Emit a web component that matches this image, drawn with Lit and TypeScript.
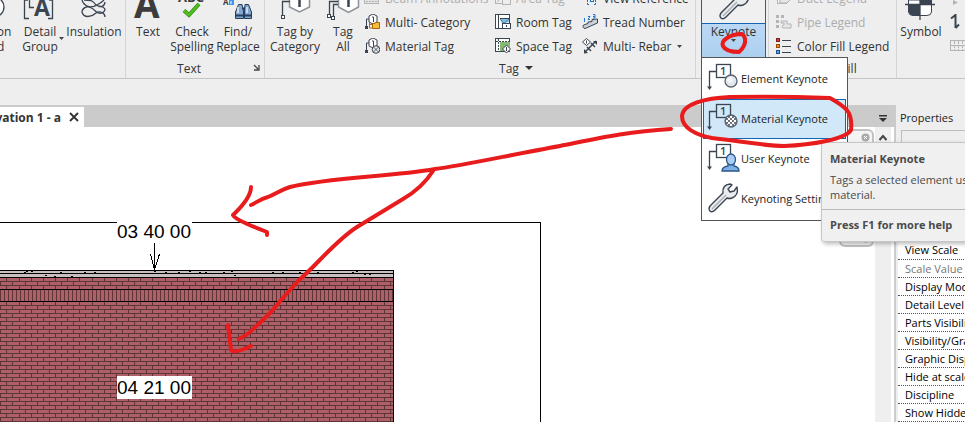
import { LitElement, html, svg, css, TemplateResult } from "lit";
import { customElement } from "lit/decorators.js";

const DARK = "#3b4552";
const GREY = "#b4b4b4";

const wrench = svg`
  <path d="M4 29 Q2 27 4 24 L17 11 Q16 3 24 2 L26 3 L22 7 L24 10 L28 9 L31 5 Q33 13 26 16 Q23 17 21 16 L9 28 Q6 31 4 29 Z"
    fill="#e9ebee" stroke="${DARK}" stroke-width="1.4" stroke-linejoin="round"/>
  <path d="M6 27 L20 13" stroke="#a9adb5" stroke-width="1.5"/>`;

const noteBase = svg`
  <rect x="10.5" y="2.5" width="14" height="13" fill="none" stroke="${DARK}" stroke-width="1.3"/>
  <path d="M10 9.500 H3.500 V25" fill="none" stroke="${DARK}" stroke-width="1.3"/>
  <path d="M1 24.500 H6 L3.500 28 Z" fill="${DARK}"/>
  <text x="14" y="13" font-size="11" font-family="Open Sans, sans-serif" font-weight="600" fill="${DARK}">1</text>`;

const menuIcons: Record<string, TemplateResult> = {
  element: svg`${noteBase}<circle cx="25" cy="19" r="6" fill="#dfe6ec" stroke="#59636e" stroke-width="1.3"/>
    <circle cx="24" cy="18" r="3" fill="#f3f6f8"/>`,
  material: svg`
    <defs><pattern id="chk" width="4" height="4" patternUnits="userSpaceOnUse">
      <rect width="4" height="4" fill="#fff"/><rect width="2" height="2" fill="#6d747d"/><rect x="2" y="2" width="2" height="2" fill="#6d747d"/>
    </pattern></defs>
    ${noteBase}<circle cx="25" cy="19" r="6" fill="url(#chk)" stroke="#59636e" stroke-width="1.3"/>`,
  user: svg`${noteBase}
    <path d="M16 29 Q16 25 22 24 V21 H28 V24 Q33 25 33 29 Z" fill="#7fb0e6" stroke="#2d5688" stroke-width="1.3"/>
    <ellipse cx="25" cy="17.500" rx="4.500" ry="5.500" fill="#a9cdf3" stroke="#2d5688" stroke-width="1.3"/>`,
  settings: wrench,
};

const hexTag = (x: number, y: number) => svg`
  <path d="M${x} ${y - 6} L${x + 4} ${y - 4} V${y + 2} L${x} ${y + 4} L${x - 4} ${y + 2} V${y - 4} Z" fill="#fff" stroke="${DARK}" stroke-width="1"/>
  <path d="M${x - 1} ${y - 3} H${x + 0.5} V${y + 2}" fill="none" stroke="${DARK}" stroke-width="1"/>
  <path d="M${x - 4} ${y - 1} H2.500 V12" fill="none" stroke="${DARK}" stroke-width="1"/>
  <rect x="1" y="12" width="3" height="3" fill="${DARK}"/>`;

/* 16 x 16 list icons */
const smallIcons: Record<string, TemplateResult> = {
  beam: svg`<rect x="0.5" y="9.5" width="14" height="4" fill="#e2e2e2" stroke="${GREY}"/><path d="M2 11.500 H13" stroke="${GREY}" stroke-dasharray="2 1"/>`,
  multi: svg`${hexTag(9, 6)}
    <path d="M5.500 7 V14 H8 M5.500 10.500 H8" fill="none" stroke="#b06a10"/>
    <path d="M8.500 9.500 H11 L12 8.500 H15.500 V14.500 H8.500 Z" fill="#f5bd3a" stroke="#a8650c"/>`,
  material: svg`${hexTag(9, 6)}
    <circle cx="12" cy="11.500" r="3.800" fill="#e4e6e8" stroke="${DARK}"/><path d="M9.500 9 L14.500 14 M14.500 9 L9.500 14" stroke="${DARK}" stroke-width="0.8"/>`,
  area: svg`<rect x="0.500" y="1.500" width="13" height="12" fill="none" stroke="${GREY}"/><path d="M2 12 L12 3" stroke="${GREY}"/><rect x="7.500" y="9.500" width="8" height="5" fill="#eee" stroke="${GREY}"/>`,
  room: svg`<rect x="0.500" y="0.500" width="14" height="14" fill="#fff" stroke="${DARK}"/>
    <path d="M3.500 0 V15 M5 4.500 H14" stroke="${DARK}"/><path d="M5 5 H14 V8 L7 10 Z" fill="#84bfe0"/><path d="M5 5 L9 9 L14 5" fill="none" stroke="#4686ad"/>
    <rect x="7.500" y="9.500" width="8" height="5" fill="#fff" stroke="${DARK}"/><path d="M11.500 11 V13" stroke="${DARK}"/>`,
  space: svg`<rect x="0.500" y="0.500" width="14" height="13" fill="#fff" stroke="${DARK}"/>
    <rect x="5" y="4" width="10" height="9" fill="#86ba72"/><path d="M3.500 1 V14 M1 3.500 H14" stroke="${DARK}" stroke-dasharray="2 1"/>
    <path d="M11.500 7 L15.500 11 L11.500 15 L7.500 11 Z" fill="#fff" stroke="${DARK}"/><path d="M11.500 9 V13" stroke="${DARK}"/>`,
  viewref: svg`<path d="M7 6.500 H5.500 V14.500 H8 M12 6.500 H13.500 V14.500 H11" fill="none" stroke="#1f6fc4" stroke-dasharray="3 1"/><rect x="8.500" y="8.500" width="3" height="3" fill="none" stroke="#1f6fc4"/>`,
  tread: svg`<path d="M1.500 11 L6 9.500 V8 L10 7.500 V5.500 L15.500 5 V9 L3 14.500 Q0 14 1.500 11 Z" fill="#c9d0d8" stroke="${DARK}"/>
    <path d="M2.500 4 V8 M6 2.500 H8 L6 5.500 H8 M11 0.500 H13 V4 H11 M11 2.500 H13" fill="none" stroke="#1f78d6"/>`,
  rebar: svg`<path d="M4.500 0.500 L8.500 4 L4.500 7.500 L0.500 4 Z" fill="#fff" stroke="${DARK}"/><path d="M4.500 2.500 V5.500" stroke="${DARK}"/>
    <path d="M3 14 L14 3 M5 9 L9 13 M9 5 L13 9" stroke="${DARK}" stroke-width="1.500"/><path d="M11 3 H15 V7 Z M2 15.500 V11 L6 15 Z" fill="${DARK}"/>`,
  duct: svg`<rect x="1.500" y="3.500" width="9" height="10" fill="none" stroke="${GREY}"/><path d="M4 9 L9 5 H15 V9 L11 13 H4 Z" fill="#e6e6e6" stroke="${GREY}"/>`,
  pipe: svg`<path d="M0 1 h3 v3 h-3 z M5 1 h3 v3 h-3 z M0 6 h3 v3 h-3 z M0 11 h3 v3 h-3 z" fill="${GREY}"/>
    <path d="M5 7 H11 V10 H15 V14 H7 Q5 13 7 11 H8 V9 H5 Z" fill="#e6e6e6" stroke="${GREY}"/>`,
  color: svg`<rect x="0.500" y="0.500" width="3" height="3" fill="#d33" stroke="#7b2222"/><rect x="0.500" y="6.500" width="3" height="3" fill="#f08a1c" stroke="#9a4b08"/>
    <rect x="0.500" y="12.500" width="3" height="3" fill="#5aa5e8" stroke="#1f4f86"/><path d="M6 2.500 H15 M6 8.500 H15 M6 14.500 H15" stroke="${DARK}"/>`,
};

/* Large icons: 36 x 23 visible part of the ribbon glyphs */
const bigIcons: Record<string, TemplateResult> = {
  detail: svg`<path d="M6 0 H2.500 V18.500 H7 M27 0 H30.500 V18.500 H26" fill="none" stroke="${DARK}" stroke-width="1.300"/>
    <path d="M7.500 0 V7.500 H12" fill="none" stroke="${DARK}" stroke-width="1.300"/>
    <text x="12" y="16" font-size="23" font-weight="700" font-family="Open Sans, sans-serif" fill="${DARK}">A</text>`,
  insulation: svg`<g fill="none" stroke="${DARK}" stroke-width="1.300">
    <path d="M6 0 Q7 4 12 6.500 Q17 7.500 21 5 Q25 3 28 0"/><path d="M8 0 Q11 0 15 0.500 Q18 2 20 5 Q23 7 26 6.500 Q29 5 29 2"/>
    <path d="M12 6.500 Q6 8 6 12 Q7 16.500 12 16.500 Q17 16 20 13 Q23 11 26 12.500 Q29 14 29 17"/><path d="M12 6.500 Q17 8 20 11.500 Q23 14 26 13 Q29 11.500 29 9 Q27 6 23 6.500"/></g>`,
  text: svg`<text x="4" y="18" font-size="37" font-weight="700" font-family="Open Sans, sans-serif" fill="#3c3c3c">A</text>`,
  check: svg`<text x="4" y="2" font-size="13" font-weight="700" font-family="Open Sans, sans-serif" fill="#3c3c3c">ABC</text>
    <path d="M10 10.500 L15 15 L25 4" fill="none" stroke="#2f8a0d" stroke-width="4"/><path d="M10 10.500 L15 15 L25 4" fill="none" stroke="#4fc01c" stroke-width="2.500"/>`,
  find: svg`<text x="3" y="5" font-size="8" font-weight="700" font-family="Open Sans, sans-serif" fill="#3c3c3c">A</text>
    <rect x="9" y="0" width="5" height="5" fill="#3b97f0"/><path d="M11 1 V4" stroke="#fff"/>
    <g fill="#83a8d0" stroke="#253e5e" stroke-width="1"><path d="M18.500 4.500 H22 L23.500 11 V18.500 H15.500 V12 Z"/><path d="M25 4.500 H28.500 L31.500 12 V18.500 H24.500 V11 Z"/></g>
    <path d="M16 15.500 H23 M25 15.500 H31 M22 8.500 H25" stroke="#253e5e" stroke-width="2"/><path d="M18 7 V13 M27 7 V13" stroke="#e1edf9" stroke-width="1.500"/>`,
  tagcat: svg`<path d="M12.500 0 V7 L22.500 12 L32.500 7 V0" fill="#fff" stroke="#8b929a" stroke-width="1.500"/>
    <path d="M22.500 0 V7" stroke="${DARK}" stroke-width="2.500"/><path d="M13 1.500 H5.500 V15" fill="none" stroke="${DARK}" stroke-width="1.300"/>
    <rect x="4.500" y="15.500" width="3" height="3" fill="#fff" stroke="${DARK}"/>`,
  tagall: svg`<path d="M13.500 0 V7 L23.500 12.500 L33.500 7 V0" fill="#fff" stroke="#8b929a" stroke-width="1.500"/>
    <path d="M23.500 0 V7" stroke="${DARK}" stroke-width="2.500"/><path d="M13 1.500 H4.500 V15 M13 4.500 H8.500 V17" fill="none" stroke="${DARK}" stroke-width="1.300"/>
    <rect x="2.500" y="14.500" width="3" height="3" fill="#fff" stroke="${DARK}"/><rect x="6.500" y="16.500" width="3" height="3" fill="#fff" stroke="${DARK}"/>`,
  symbol: svg`<path d="M5.500 0 H28.500 V12 Q28 15.500 24 15.500 H10 Q6 15.500 5.500 12 Z" fill="#fff" stroke="${DARK}"/>
    <path d="M6 4.500 H17 V15.500 H10 Q6 15 6 12 Z M17 0 H28 V4.500 H17 Z" fill="${DARK}"/>
    <path d="M2 4.500 H32 M17 0 V20" stroke="${DARK}" stroke-width="1.300"/>`,
  cloud: svg`<circle cx="24" cy="7" r="10" fill="#fff" stroke="${DARK}" stroke-width="1.300"/>`,
};

const PROPS = ["View Scale", "Scale Value 1:", "Display Model", "Detail Level", "Parts Visibility", "Visibility/Graphics", "Graphic Display", "Hide at scales", "Discipline", "Show Hidden Lines"];

const MENU = [
  ["element", "Element Keynote"],
  ["material", "Material Keynote"],
  ["user", "User Keynote"],
  ["settings", "Keynoting Settings"],
];

const JOINTS_A = [6, 19, 31, 43, 55, 67];
const JOINTS_B = [0, 12, 25, 37, 49, 61];
const SPECKS = [[24, 272], [26, 271], [31, 271], [60, 272], [84, 272], [94, 272], [45, 275], [54, 276], [71, 276], [154, 271], [165, 272], [178, 272], [189, 271], [199, 272], [205, 272], [223, 272], [231, 271], [234, 275], [272, 272], [282, 272], [299, 272], [317, 272], [352, 272], [356, 271], [364, 274], [369, 274]];

@customElement("app-root")
export class AppRoot extends LitElement {
  static styles = css`
    :host { display: block; font-family: "Open Sans", "Noto Sans", sans-serif; font-size: 11px; line-height: 15px; color: #333; }
    * { box-sizing: border-box; }
    button { font: inherit; color: inherit; background: none; border: 0; padding: 0; margin: 0; }
    svg { display: block; flex: none; }
    .shell { position: relative; min-height: 100vh; display: flex; flex-direction: column; overflow: hidden; background: #eee; }
    .ribbon { display: flex; height: 79px; border-bottom: 1px solid #c5c5c5; }
    .group { flex: none; display: flex; flex-direction: column; border-right: 1px solid #d4d4d4; }
    .g-detail { width: 126px; }
    .g-text { width: 139px; }
    .g-tag { width: 431px; }
    .g-key { width: 73px; }
    .g-fill { width: 128px; }
    .g-symbol { flex: 1; border: 0; overflow: hidden; }
    .body { display: flex; height: 58px; }
    .title { display: flex; align-items: center; justify-content: center; gap: 6px; height: 20px; position: relative; font-size: 12px; }
    .g-text .title { padding-right: 12px; }
    .g-tag .title { padding-left: 72px; }
    .launch { position: absolute; right: 4px; top: 6px; }
    .big { flex: none; display: flex; flex-direction: column; align-items: center; text-align: center; font-size: 12px; }
    .big svg { margin-bottom: 1px; }
    .cut { width: 56px; margin-left: -40px; }
    .w36 { width: 36px; }
    .w44 { width: 44px; }
    .w48 { width: 48px; }
    .w60 { width: 60px; }
    .label { white-space: nowrap; }
    .withdrop { position: relative; }
    .caret { position: absolute; right: -6px; bottom: 13px; }
    .list { display: flex; flex-direction: column; margin-top: -14px; }
    .row { display: flex; align-items: center; gap: 5px; height: 24px; white-space: nowrap; font-size: 12px; }
    .off { color: #adadad; }
    .c1 { width: 131px; margin-left: 3px; }
    .c2 { width: 87px; }
    .fill { padding-left: 7px; }
    .anchor { position: relative; margin-left: 5px; }
    .key { display: flex; flex-direction: column; align-items: center; width: 65px; height: 57px; border: 1px solid #1464b4; border-width: 0 1px; background: linear-gradient(#c5def7, #add0f0); font-size: 12px; }
    .keyicon { width: 100%; height: 24px; display: flex; justify-content: center; align-items: flex-end; background: #f0f0f0; border-bottom: 1px solid #1464b4; }
    .menu { position: absolute; left: 0; top: 57px; z-index: 3; width: 147px; padding: 1px; background: #fff; border: 1px solid #555; }
    .item { display: flex; align-items: center; gap: 1px; width: 100%; height: 40px; padding: 0 0 2px 2px; border: 1px solid transparent; white-space: nowrap; color: #222; }
    .item.on { background: #d1e8f9; border-color: #1464b4; }
    .tip { position: absolute; left: 119px; top: 84px; width: 240px; height: 100px; border: 1px solid #c6c6c6; border-radius: 3px; background: #f0f0f0; box-shadow: 2px 2px 4px #0004; color: #4a4a4a; white-space: nowrap; }
    .tip h2, .tip p { margin: 0; font-size: 11px; line-height: 15px; padding: 0 8px; }
    .tip h2 { padding-top: 8px; padding-bottom: 6px; }
    .tip .help { margin-top: 7px; padding-top: 7px; border-top: 1px solid #bbb; font-weight: 700; }
    .work { flex: 1; display: flex; margin-top: 26px; }
    .doc { flex: 1; min-width: 0; display: flex; flex-direction: column; background: #fff; }
    .tabs { display: flex; align-items: flex-end; justify-content: space-between; height: 22px; background: #cbcbcb; padding-right: 6px; }
    .tab { display: flex; align-items: center; justify-content: flex-end; gap: 8px; width: 84px; height: 20px; padding-right: 5px; overflow: hidden; background: #fff; font-size: 12px; font-weight: 700; white-space: nowrap; }
    .more { height: 16px; }
    .view { flex: 1; display: flex; position: relative; }
    .drawing { flex: 1; min-width: 0; position: relative; }
    .drawing > svg { position: absolute; inset: 0; }
    .nav { position: absolute; right: 1px; top: 2px; width: 35px; height: 118px; border: 2px solid #c2c2c2; border-radius: 6px; background: #f4f4f4; display: flex; flex-direction: column; align-items: flex-end; justify-content: space-between; padding: 2px; }
    .scroll { width: 16px; margin-right: 3px; background: #efefef; padding-top: 7px; display: flex; justify-content: center; }
    .props { flex: none; width: 71px; border-left: 2px solid #ccc; overflow: hidden; }
    .props h3 { margin: 0; height: 22px; padding: 5px 0 0 4px; font-size: 11px; font-weight: 400; line-height: 15px; color: #222; }
    .type { height: 111px; margin: 3px 0 0 5px; width: 200px; border: 1px solid #bdbdbd; }
    table { border-collapse: collapse; width: 200px; margin-left: 2px; background: #fff; color: #000; }
    th { height: 18px; padding: 0 0 0 7px; font-weight: 400; text-align: left; line-height: 17px; border-bottom: 1px dotted #555; white-space: nowrap; }
    th.dim { color: #777; }
    .ink { position: absolute; inset: 0; z-index: 9; pointer-events: none; }
  `;

  private big(icon: string, lines: string[], cls: string, drop = false) {
    return html`<button class="big ${cls}">
      <svg width="36" height="23" viewBox="0 0 36 23">${bigIcons[icon]}</svg>
      <span class="withdrop">${lines.map((l) => html`<div class="label">${l}</div>`)}
        ${drop ? html`<svg class="caret" width="5" height="3" viewBox="0 0 5 3"><path d="M0 0 H5 L2.500 3 Z" fill="#444"/></svg>` : ""}
      </span></button>`;
  }

  private row(icon: string, label: string, off = false, drop = false) {
    return html`<button class="row ${off ? "off" : ""}">
      <svg width="16" height="16" viewBox="0 0 16 16">${smallIcons[icon]}</svg>${label}
      ${drop ? html`<svg width="5" height="3" viewBox="0 0 5 3"><path d="M0 0 H5 L2.500 3 Z" fill="#444"/></svg>` : ""}</button>`;
  }

  private ribbon() {
    return html`<header class="ribbon">
      <section class="group g-detail"><div class="body">
        ${this.big("cloud", ["Revision", "Cloud"], "cut")}
        ${this.big("detail", ["Detail", "Group"], "w48", true)}
        ${this.big("insulation", ["Insulation"], "w60")}
      </div></section>
      <section class="group g-text"><div class="body">
        ${this.big("text", ["Text"], "w44")}
        ${this.big("check", ["Check", "Spelling"], "w44")}
        ${this.big("find", ["Find/", "Replace"], "w48")}
      </div><div class="title">Text
        <svg class="launch" width="7" height="7" viewBox="0 0 7 7"><path d="M1 1 L5 5 M6 1 V6 H1" fill="none" stroke="#444" stroke-width="1.300"/></svg>
      </div></section>
      <section class="group g-tag"><div class="body">
        ${this.big("tagcat", ["Tag by", "Category"], "w60")}
        ${this.big("tagall", ["Tag", "All"], "w36")}
        <div class="list c1">${this.row("beam", "Beam Annotations", true)}${this.row("multi", "Multi- Category")}${this.row("material", "Material Tag")}</div>
        <div class="list c2">${this.row("area", "Area Tag", true)}${this.row("room", "Room Tag")}${this.row("space", "Space Tag")}</div>
        <div class="list">${this.row("viewref", "View Reference")}${this.row("tread", "Tread Number")}${this.row("rebar", "Multi- Rebar", false, true)}</div>
      </div><div class="title">Tag
        <svg width="8" height="4" viewBox="0 0 8 4"><path d="M0 0 H8 L4 4 Z" fill="#333"/></svg>
      </div></section>
      <section class="group g-key"><div class="anchor">
        <button class="key"><span class="keyicon"><svg width="34" height="23" viewBox="0 11 34 23">${wrench}</svg></span>
          <span>Keynote</span><svg width="5" height="3" viewBox="0 0 5 3"><path d="M0 0 H5 L2.500 3 Z" fill="#444"/></svg></button>
        <div class="menu">
          ${MENU.map(([k, t]) => html`<button class="item ${k === "material" ? "on" : ""}"><svg width="34" height="32" viewBox="0 0 34 32">${menuIcons[k]}</svg>${t}</button>`)}
          <div class="tip" role="tooltip"><h2>Material Keynote</h2><p>Tags a selected element using its<br>material.</p><p class="help">Press F1 for more help</p></div>
        </div>
      </div></section>
      <section class="group g-fill"><div class="body">
        <div class="list fill">${this.row("duct", "Duct Legend", true)}${this.row("pipe", "Pipe Legend", true)}${this.row("color", "Color Fill Legend")}</div>
      </div><div class="title">Color Fill</div></section>
      <section class="group g-symbol"><div class="body">
        ${this.big("symbol", ["Symbol"], "w48")}
        <svg width="24" height="58" viewBox="0 0 24 58"><path d="M8 0 L13 2.500 L8 5 Z" fill="${GREY}"/>
          <path d="M10.500 14 V28 M6 18.500 L10.500 15 M10.500 28 L14 24.500" fill="none" stroke="${DARK}" stroke-width="2"/>
          <rect x="5.500" y="40.500" width="22" height="10" fill="none" stroke="${GREY}"/><path d="M6 45.500 H24 M9.500 41 V50 M13.500 41 V50 M17.500 41 V50" stroke="${GREY}" stroke-dasharray="3 1"/></svg>
      </div></section>
    </header>`;
  }

  private drawing() {
    return html`<svg width="100%" height="100%"><defs>
        <pattern id="brick" x="0" y="278" width="73" height="8" patternUnits="userSpaceOnUse">
          <rect width="73" height="8" fill="#ad6068"/><rect y="3" width="73" height="1" fill="#5e3437"/><rect y="7" width="73" height="1" fill="#5e3437"/>
          ${JOINTS_A.map((x) => svg`<rect x="${x}" y="0" width="1" height="3" fill="#5e3437"/>`)}
          ${JOINTS_B.map((x) => svg`<rect x="${x}" y="4" width="1" height="3" fill="#5e3437"/>`)}
        </pattern>
        <pattern id="soldier" width="4" height="4" patternUnits="userSpaceOnUse"><rect width="4" height="4" fill="#ad6068"/><rect width="1" height="4" fill="#5e3437"/></pattern>
      </defs>
      <g transform="translate(0 -127)" shape-rendering="crispEdges">
        <rect x="-10.500" y="222.500" width="551" height="2000" fill="none" stroke="#000"/>
        <rect x="0" y="270" width="394" height="2000" fill="#000"/>
        <rect x="0" y="271" width="393" height="2" fill="#c8c0c0"/><rect x="0" y="274" width="393" height="3" fill="#c8c0c0"/>
        ${SPECKS.map(([x, y]) => svg`<rect x="${x}" y="${y}" width="2" height="1" fill="#000"/>`)}
        <rect x="0" y="278" width="393" height="11" fill="url(#brick)"/>
        <rect x="0" y="290" width="393" height="11" fill="url(#soldier)"/>
        <rect x="0" y="302" width="393" height="2000" fill="url(#brick)"/>
        <rect x="117" y="220" width="75" height="23" fill="#fff"/><rect x="117" y="376" width="75" height="23" fill="#fff"/>
        <path d="M154.500 243 V270 M150.500 254 L154.500 270 M159.500 254 L154.500 270" fill="none" stroke="#000"/>
        <text x="117" y="238" font-size="19" font-family="Liberation Sans, sans-serif">03 40 00</text>
        <text x="117" y="394" font-size="19" font-family="Liberation Sans, sans-serif">04 21 00</text>
      </g></svg>`;
  }

  render() {
    const knob = html`<svg width="9" height="9" viewBox="0 0 9 9"><circle cx="4.500" cy="4.500" r="4" fill="#aaa"/><path d="M3 3 L6 6 M6 3 L3 6" stroke="#fff"/></svg>`;
    return html`<div class="shell">
      ${this.ribbon()}
      <main class="work">
        <div class="doc">
          <div class="tabs">
            <div class="tab">Elevation 1 - a<svg width="10" height="10" viewBox="0 0 10 10"><path d="M1 1 L9 9 M9 1 L1 9" stroke="#333" stroke-width="1.800"/></svg></div>
            <button class="more"><svg width="10" height="8" viewBox="0 0 10 8"><path d="M1 0 H9 V1.500 H1 Z M1 3 H9 L5 7 Z" fill="#333"/></svg></button>
          </div>
          <div class="view">
            <div class="drawing">${this.drawing()}<div class="nav">${knob}${knob}</div></div>
            <div class="scroll"><svg width="10" height="7" viewBox="0 0 10 7"><path d="M1.500 6 L5 2 L8.500 6" fill="none" stroke="#444" stroke-width="2"/></svg></div>
          </div>
        </div>
        <aside class="props"><h3>Properties</h3><div class="type"></div>
          <table>${PROPS.map((p, i) => html`<tr><th scope="row" class=${i === 1 ? "dim" : ""}>${p}</th></tr>`)}</table>
        </aside>
      </main>
      <svg class="ink" width="100%" height="100%"><g fill="none" stroke="#e81c1c" stroke-width="4" stroke-linecap="round" stroke-linejoin="round">
        <path d="M742 34 Q733 34 727 38 Q721 42 723 46 Q726 52 739 52 Q746 46 745 39 Q744 34 740 34"/>
        <path d="M830 98 Q780 96 730 97 C705 98 683 104 682 116 C682 128 696 135 712 138 C740 141 765 146 784 146 C812 145 846 139 851 130 C853 112 846 107 830 98"/>
        <path d="M671 129 C625 132 600 138 560 146 C510 155 460 166 435 169 C390 177 330 177 290 187 C280 190 276 194 268 197 C260 199 256 203 251 205"/>
        <path d="M251 187 Q251 198 233 215 Q235 220 267 232 V235"/>
        <path d="M433 171 Q422 188 403 199 L357 227 C335 241 315 267 299 280 L281 300 C270 315 258 324 250 332 Q245 336 239 339"/>
        <path d="M228 325 L231 350 Q234 354 251 346"/>
      </g></svg>
    </div>`;
  }
}
